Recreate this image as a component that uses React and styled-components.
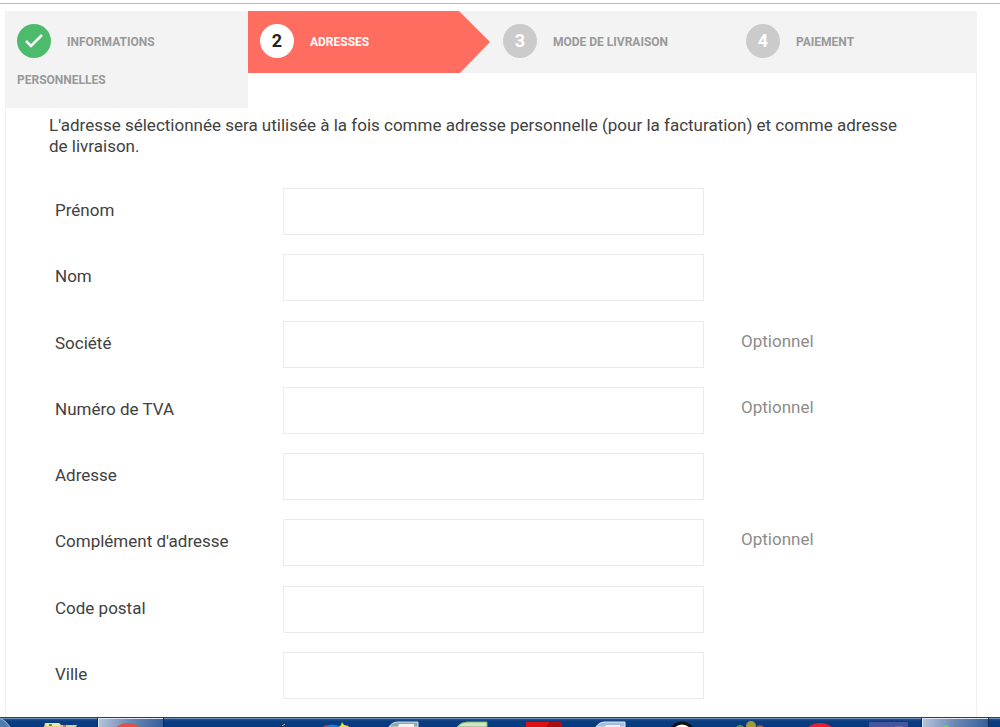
import React from "react";
import styled, { createGlobalStyle, css } from "styled-components";

const GlobalStyle = createGlobalStyle`
  *, *::before, *::after { box-sizing: border-box; }
  body {
    margin: 0;
    background: #fff;
    color: #414141;
    font: 17px/21px Roboto, "Liberation Sans", sans-serif;
  }
`;

const Page = styled.div`
  display: flex;
  flex-direction: column;
  min-height: 100vh;
  padding-top: 3px;
`;

const Rule = styled.div`
  height: 1px;
  background: #b9b9b9;
`;

const Panel = styled.main`
  flex: 1;
  display: flex;
  flex-direction: column;
  margin: 7px 23px 0 5px;
  border: solid #efefef;
  border-width: 0 1px;
`;

const Steps = styled.ol`
  display: grid;
  grid-template-columns: repeat(4, 1fr);
  align-items: start;
  list-style: none;
  margin: 0 -1px;
  padding: 0;
`;

const Badge = styled.span`
  display: inline-flex;
  align-items: center;
  justify-content: center;
  width: 34px;
  height: 34px;
  margin: 0 16px 4px 0;
  border-radius: 50%;
  background: #cbcbcb;
  color: #fff;
  font-size: 18px;
  line-height: 34px;
  vertical-align: middle;
`;

const Step = styled.li`
  min-height: 62px;
  padding: 13px 12px 10px;
  background: #f3f3f3;
  color: #999;
  font-size: 12px;
  font-weight: 700;
  line-height: 36px;
  text-transform: uppercase;

  ${(p) =>
    p.$state === "done" &&
    css`
      ${Badge} { background: #4cbb6c; }
    `}

  ${(p) =>
    p.$state === "current" &&
    css`
      background: #ff6c60;
      color: #fff;
      clip-path: polygon(0 0, calc(100% - 32px) 0, calc(100% - 1px) 50%, calc(100% - 31px) 100%, 0 100%);
      ${Badge} { background: #fff; color: #232323; }
    `}
`;

const CurrentCell = styled.li`
  background: #f3f3f3;
`;

const Intro = styled.p`
  margin: 0;
  padding: 7px 58px 0 43px;
`;

const Form = styled.form`
  flex: 1;
  display: flex;
  flex-direction: column;
  justify-content: space-between;
  padding: 31px 0 18px 49px;
`;

const Row = styled.div`
  display: grid;
  grid-template-columns: 228px minmax(0, 421fr) minmax(0, 272fr);
  align-items: center;
`;

const Label = styled.label`
  padding-bottom: 2px;
`;

const TextInput = styled.input`
  width: 100%;
  height: 47px;
  padding: 0 12px;
  border: 1px solid #ebebeb;
  background: #fff;
  color: inherit;
  font: inherit;
`;

const Hint = styled.span`
  padding: 0 0 6px 37px;
  color: #8c8c8c;
`;

const Taskbar = styled.footer`
  display: flex;
  height: 10px;
  overflow: hidden;
  border-top: 1px solid #343e4c;
  background: linear-gradient(#6f90b5 0 1px, #1f4c86 1px 2px, #0a3c80 3px, #063a80);
  padding-right: 10px;
`;

const Orb = styled.svg`
  flex: none;
  width: 28px;
  height: 9px;
`;

const TaskList = styled.div`
  flex: 1;
  display: grid;
  grid-template-columns: repeat(14, 1fr);
`;

const TaskButton = styled.button`
  display: flex;
  justify-content: center;
  height: 9px;
  margin: 0 2px 0 1px;
  padding: 0;
  border: 0;
  background: ${(p) =>
    p.$open ? "linear-gradient(100deg, #b7c6dc, #6b88b4 50%, #345f9c)" : "none"};
  box-shadow: ${(p) => (p.$open ? "inset 1px 1px #dce6f2, 0 0 0 1px #16294a" : "none")};
`;

const TaskIcon = styled.svg`
  width: 44px;
  height: 9px;
`;

const steps = [
  { label: "Informations personnelles", state: "done" },
  { label: "Adresses", state: "current" },
  { label: "Mode de livraison", state: "next" },
  { label: "Paiement", state: "next" },
];

const fields = [
  { id: "firstname", label: "Prénom" },
  { id: "lastname", label: "Nom" },
  { id: "company", label: "Société", optional: true },
  { id: "vat", label: "Numéro de TVA", optional: true },
  { id: "address", label: "Adresse" },
  { id: "address2", label: "Complément d'adresse", optional: true },
  { id: "postcode", label: "Code postal" },
  { id: "city", label: "Ville" },
];

const tasks = [
  {
    name: "Explorateur",
    art: (
      <>
        <path d="M4 9 5 5h14l2 2h16l-1 2z" fill="#e2cf7c" />
        <path d="M6 5h13l2 3H6z" fill="#f2e6a8" />
        <path d="M9 6h3v2H9z" fill="#37a34b" />
        <path d="M23 7h3v2h-3z" fill="#dc6a48" />
      </>
    ),
  },
  { name: "Chrome", open: true, art: <circle cx="19" cy="23" r="18" fill="#e05243" /> },
  { name: "Bureau", art: null },
  {
    name: "Stylet",
    art: (
      <>
        <path d="m34 9 4-4 2 1-3 3z" fill="#20242b" />
        <path d="m36 8 3-2" stroke="#b9c2cf" />
      </>
    ),
  },
  {
    name: "Navigateur",
    art: (
      <>
        <path d="M7 9q10-5 20 0z" fill="#147dd8" />
        <path d="m27 4 2 3 5 1-1 1h-9l2-2z" fill="#ffdc24" />
        <path d="M9 9q0-2 3-2v2z" fill="#a33a65" />
      </>
    ),
  },
  {
    name: "Document",
    art: (
      <>
        <path d="M6 9q3-5 9-5h20v5z" fill="#8faaae" stroke="#d4dfe1" />
        <path d="M16 6h15v3H15z" fill="#eef3f4" />
      </>
    ),
  },
  {
    name: "Tableur",
    art: <path d="M5 9q4-5 10-5h20v5z" fill="#d5e0d1" stroke="#73bd53" />,
  },
  {
    name: "Lecteur PDF",
    art: (
      <>
        <path d="M5 4h36v5H5z" fill="#df1010" />
        <path d="M29 4h12v5H25z" fill="#a90e12" />
      </>
    ),
  },
  {
    name: "Texte",
    art: (
      <>
        <path d="M6 9q3-5 9-5h20v5z" fill="#a5bbdf" stroke="#dfe8f6" />
        <path d="M16 7h14v2H15z" fill="#eef3fb" />
      </>
    ),
  },
  {
    name: "Messagerie",
    art: <circle cx="24" cy="17" r="12" fill="#fff" stroke="#111" strokeWidth="3" />,
  },
  {
    name: "Contacts",
    art: (
      <>
        <circle cx="13" cy="11" r="4" fill="#5d9542" />
        <circle cx="24" cy="8" r="5" fill="#a09b35" />
        <circle cx="33" cy="11" r="4" fill="#a65429" />
      </>
    ),
  },
  {
    name: "Opera",
    art: <ellipse cx="24" cy="16" rx="15" ry="11" fill="#ed1c2e" />,
  },
  {
    name: "Équipe",
    art: (
      <>
        <path d="M5 4h39v5H5z" fill="#4654a0" />
        <ellipse cx="35" cy="10" rx="5" ry="2" fill="#6576b5" />
      </>
    ),
  },
  { name: "Capture", open: true, art: <circle cx="13" cy="10" r="3" fill="#5fd54f" /> },
];

function StepContent({ step, number }) {
  return (
    <>
      <Badge>
        {step.state === "done" ? (
          <svg width="20" height="16" viewBox="0 0 20 16" aria-hidden="true">
            <path d="m2 8 5 5L18 2" fill="none" stroke="#fff" strokeWidth="2.5" />
          </svg>
        ) : (
          number
        )}
      </Badge>
      {step.label}
    </>
  );
}

export default function App() {
  return (
    <Page>
      <GlobalStyle />
      <Rule />
      <Panel>
        <Steps>
          {steps.map((step, i) =>
            step.state === "current" ? (
              <CurrentCell key={step.label} aria-current="step">
                <Step as="div" $state="current">
                  <StepContent step={step} number={i + 1} />
                </Step>
              </CurrentCell>
            ) : (
              <Step key={step.label} $state={step.state}>
                <StepContent step={step} number={i + 1} />
              </Step>
            )
          )}
        </Steps>
        <Intro>
          L'adresse sélectionnée sera utilisée à la fois comme adresse personnelle (pour la
          facturation) et comme adresse de livraison.
        </Intro>
        <Form>
          {fields.map((f) => (
            <Row key={f.id}>
              <Label htmlFor={f.id}>{f.label}</Label>
              <TextInput id={f.id} name={f.id} type="text" />
              {f.optional && <Hint>Optionnel</Hint>}
            </Row>
          ))}
        </Form>
      </Panel>
      <Taskbar>
        <Orb viewBox="0 0 28 9" aria-hidden="true">
          <circle cx="-7" cy="18" r="19" fill="#4d7fae" stroke="#a9c3dc" />
        </Orb>
        <TaskList>
          {tasks.map((t) => (
            <TaskButton key={t.name} type="button" aria-label={t.name} $open={t.open}>
              <TaskIcon viewBox="0 0 44 9" aria-hidden="true">
                {t.art}
              </TaskIcon>
            </TaskButton>
          ))}
        </TaskList>
      </Taskbar>
    </Page>
  );
}
